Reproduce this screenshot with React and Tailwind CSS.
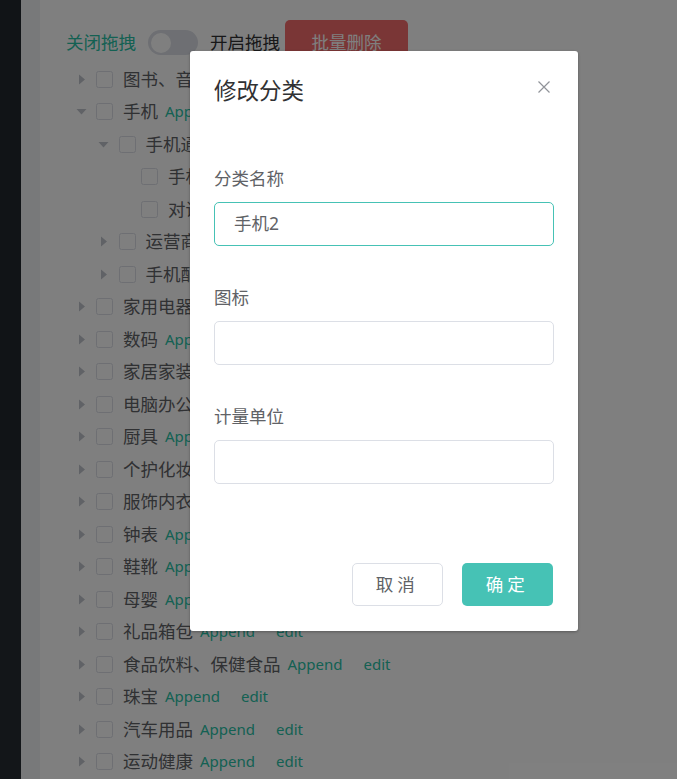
import React from "react";

const rows = [
  { level: 0, label: "图书、音像、电子书刊", caret: "right" },
  { level: 0, label: "手机", caret: "down" },
  { level: 1, label: "手机通讯", caret: "down" },
  { level: 2, label: "手机", caret: null },
  { level: 2, label: "对讲机", caret: null },
  { level: 1, label: "运营商", caret: "right" },
  { level: 1, label: "手机配件", caret: "right" },
  { level: 0, label: "家用电器", caret: "right" },
  { level: 0, label: "数码", caret: "right" },
  { level: 0, label: "家居家装", caret: "right" },
  { level: 0, label: "电脑办公", caret: "right" },
  { level: 0, label: "厨具", caret: "right" },
  { level: 0, label: "个护化妆", caret: "right" },
  { level: 0, label: "服饰内衣", caret: "right" },
  { level: 0, label: "钟表", caret: "right" },
  { level: 0, label: "鞋靴", caret: "right" },
  { level: 0, label: "母婴", caret: "right" },
  { level: 0, label: "礼品箱包", caret: "right" },
  { level: 0, label: "食品饮料、保健食品", caret: "right" },
  { level: 0, label: "珠宝", caret: "right" },
  { level: 0, label: "汽车用品", caret: "right" },
  { level: 0, label: "运动健康", caret: "right" },
];

const indent = ["pl-0", "pl-[22.5px]", "pl-[45px]"];

function Caret({ dir }) {
  return (
    <span className="w-[30px] h-[30px] flex items-center justify-center shrink-0">
      {dir && (
        <svg width="15" height="15" viewBox="0 0 15 15">
          {dir === "right" ? (
            <polygon points="5,2.5 11,7.5 5,12.5" fill="#c0c4cc" />
          ) : (
            <polygon points="2.5,5 12.5,5 7.5,10.5" fill="#c0c4cc" />
          )}
        </svg>
      )}
    </span>
  );
}

function Row({ row }) {
  return (
    <div className={`h-[32.5px] flex items-center ${indent[row.level]}`}>
      <Caret dir={row.caret} />
      <span className="w-[17px] h-[17px] border border-[#dcdfe6] rounded-[2.5px] bg-white shrink-0" />
      <span className="ml-[10px] text-[17.5px] text-[#606266] whitespace-nowrap">{row.label}</span>
      <span className="ml-[7px] text-[15px] text-[#28c2a6] whitespace-nowrap">Append</span>
      <span className="ml-[21px] text-[15px] text-[#28c2a6] whitespace-nowrap">edit</span>
    </div>
  );
}

export default function App() {
  return (
    <div className="relative w-[677px] h-[779px] overflow-hidden flex font-['Noto_Sans','Noto_Sans_CJK_SC',sans-serif]">
      {/* sidebar */}
      <div className="w-[21px] flex flex-col shrink-0">
        <div className="h-[470px] bg-[#22282e]" />
        <div className="flex-1 bg-[#262c33]" />
      </div>
      <div className="w-[19px] bg-[#f0f2f5] shrink-0" />
      {/* card */}
      <div className="flex-1 bg-white pl-[26px] pt-[20px]">
        <div className="h-[45px] flex items-center mb-[-2.25px]">
          <span className="text-[17.5px] text-[#28c2a6]">关闭拖拽</span>
          <span className="ml-[12px] w-[50px] h-[25px] rounded-full bg-[#dcdfe6] flex items-center px-[2.5px]">
            <span className="w-[20px] h-[20px] rounded-full bg-white" />
          </span>
          <span className="ml-[12px] text-[17.5px] text-[#303133]">开启拖拽</span>
          <span className="ml-[5px] h-[45px] w-[123px] rounded-[5px] bg-[#f56c6c] text-white text-[17.5px] flex items-center justify-center">
            批量删除
          </span>
        </div>
        <div>
          {rows.map((r, i) => (
            <Row key={i} row={r} />
          ))}
        </div>
      </div>

      {/* overlay */}
      <div className="absolute inset-0 bg-black/50" />

      {/* dialog */}
      <div className="absolute left-[190px] top-[51px] w-[388px] h-[580px] bg-white rounded-[3px] shadow-[0_1px_3px_rgba(0,0,0,0.3)] flex flex-col">
        <div className="pt-[25px] px-[24px]">
          <div className="text-[22.5px] leading-[30px] text-[#303133]">修改分类</div>
        </div>
        <svg className="absolute left-[348px] top-[30px]" width="12" height="12" viewBox="0 0 12 12">
          <path d="M0.5 0.5 L11.5 11.5 M11.5 0.5 L0.5 11.5" stroke="#909399" strokeWidth="1.2" />
        </svg>
        <div className="pt-[57px] px-[24px] flex flex-col gap-[36.5px]">
          <div>
            <div className="text-[17.5px] leading-[30px] text-[#606266] mb-[8.5px]">分类名称</div>
            <div className="h-[44px] border border-[#46c2b5] rounded-[5px] flex items-center pl-[19px] text-[17.5px] text-[#606266]">
              手机2
            </div>
          </div>
          <div>
            <div className="text-[17.5px] leading-[30px] text-[#606266] mb-[8.5px]">图标</div>
            <div className="h-[44px] border border-[#dcdfe6] rounded-[5px]" />
          </div>
          <div>
            <div className="text-[17.5px] leading-[30px] text-[#606266] mb-[8.5px]">计量单位</div>
            <div className="h-[44px] border border-[#dcdfe6] rounded-[5px]" />
          </div>
        </div>
        <div className="mt-auto pb-[25px] pr-[25px] flex justify-end gap-[18.5px]">
          <span className="w-[91.5px] h-[43.5px] border border-[#dcdfe6] rounded-[5px] flex items-center justify-center text-[17.5px] text-[#606266] tracking-[4px]">
            取消
          </span>
          <span className="w-[91.5px] h-[43.5px] rounded-[5px] bg-[#46c2b5] flex items-center justify-center text-[17.5px] text-white tracking-[4px]">
            确定
          </span>
        </div>
      </div>
    </div>
  );
}
